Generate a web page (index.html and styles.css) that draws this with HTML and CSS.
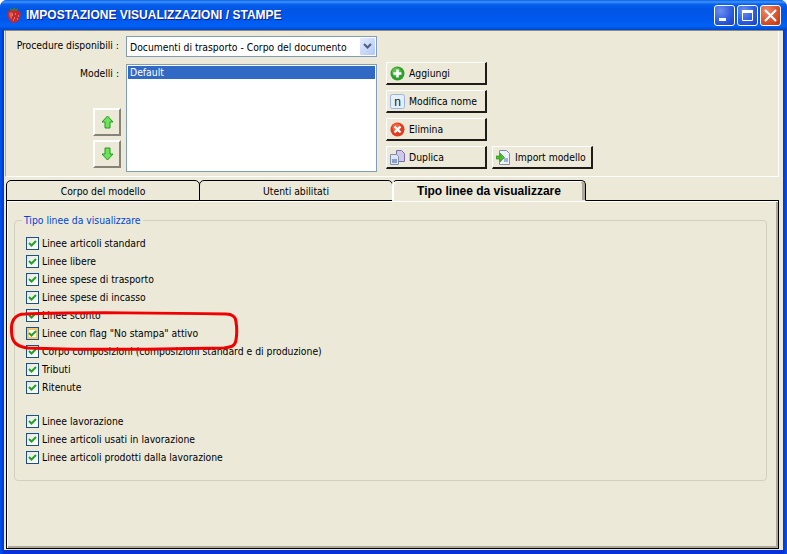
FILE: index.html
```html
<!DOCTYPE html>
<html lang="it">
<head>
<meta charset="utf-8">
<title>Impostazione visualizzazioni / stampe</title>
<link rel="stylesheet" href="styles.css">
</head>
<body>
<div class="window">
  <header class="titlebar">
    <svg class="app-icon" width="14" height="16" viewBox="0 0 14 16"><path d="M3 1l2.500 1.500L7 0l1.500 2.500L11 1l-.5 2.500L13 5H1l2.500-1.500z" fill="#4a7a30"/><path d="M.8 4.500c2-1.500 10.400-1.500 12.400 0 1.500 3.500-.5 8-3.500 10.500-1.500 1.300-3.900 1.300-5.400 0C1.300 12.500-.7 8 .8 4.500z" fill="#c4282c"/><path d="M2 6c1-1 3-1 4 0-1 3-1 5-1.500 6.500C3 11 2 8.500 2 6z" fill="#e25a52"/><path d="M5 8h1M8 7h1M11 9h1M7 11h1M10 12h1M6 13h1" stroke="#f2b8a0"/></svg>
    <h1 class="title">IMPOSTAZIONE VISUALIZZAZIONI / STAMPE</h1>
    <div class="controls">
      <span class="ctl ctl-blue"><svg width="21" height="21" viewBox="0 0 21 21"><rect x="5" y="13" width="7" height="3" fill="#fff"/></svg></span>
      <span class="ctl ctl-blue"><svg width="21" height="21" viewBox="0 0 21 21"><path d="M5.500 5.500h10v10h-10z" fill="none" stroke="#fff"/><rect x="5" y="5" width="11" height="3" fill="#fff"/></svg></span>
      <span class="ctl ctl-red"><svg width="21" height="21" viewBox="0 0 21 21"><path d="M5 5l11 11M16 5L5 16" stroke="#fff" stroke-width="2.200"/></svg></span>
    </div>
  </header>
  <main class="client">
    <section class="panel">
      <label class="lbl">Procedure disponibili :</label>
      <div class="select">
        <span class="select-text">Documenti di trasporto - Corpo del documento</span>
        <span class="select-btn"><svg width="9" height="7" viewBox="0 0 9 7"><path d="M1 1l3.500 3.500L8 1" fill="none" stroke="#4d6185" stroke-width="2"/></svg></span>
      </div>
      <span></span>
      <div class="left-col">
        <label class="lbl">Modelli :</label>
        <div class="arrows">
          <button class="arrow-btn"><svg width="13" height="14" viewBox="0 0 13 14"><path d="M6.500 1L12 7H9v6H4V7H1z" fill="#6fe05a" stroke="#1f9a1f"/></svg></button>
          <button class="arrow-btn"><svg width="13" height="14" viewBox="0 0 13 14"><path d="M6.500 13L12 7H9V1H4v6H1z" fill="#6fe05a" stroke="#1f9a1f"/></svg></button>
        </div>
      </div>
      <div class="listbox"><div class="list-item">Default</div></div>
      <div class="actions">
        <button class="btn"><svg width="15" height="15" viewBox="0 0 15 15"><circle cx="7.500" cy="7.500" r="7" fill="#2e9e2e"/><circle cx="6.500" cy="6" r="4.500" fill="#5cc04a"/><path d="M7.500 3.500v8M3.500 7.500h8" stroke="#fff" stroke-width="2.600"/></svg><span>Aggiungi</span></button>
        <button class="btn"><svg width="15" height="15" viewBox="0 0 15 15"><rect x=".5" y=".5" width="14" height="14" rx="2" fill="#e6edfb" stroke="#9db4e0"/><text x="7.500" y="11.500" text-anchor="middle" class="n-letter">n</text></svg><span>Modifica nome</span></button>
        <button class="btn"><svg width="15" height="15" viewBox="0 0 15 15"><circle cx="7.500" cy="7.500" r="7" fill="#e5391f"/><circle cx="6.500" cy="5.500" r="4" fill="#f0663f"/><path d="M4.500 4.500l6 6M10.500 4.500l-6 6" stroke="#fff" stroke-width="2.400"/></svg><span>Elimina</span></button>
        <div class="action-row">
          <button class="btn"><svg width="15" height="15" viewBox="0 0 15 15"><path d="M6.500.5h5l3 3v8h-8z" fill="#cfc8e8" stroke="#7a70a8"/><path d="M.5 4.500h6l2 2v8h-8z" fill="#dfe6f4" stroke="#7f8fb0"/><rect x="2" y="9" width="5" height="4" fill="#8aa0c8"/></svg><span>Duplica</span></button>
          <button class="btn"><svg width="15" height="15" viewBox="0 0 15 15"><path d="M3.500.5h7l3 3v11h-10z" fill="#eef2fa" stroke="#8090b0"/><rect x="8" y="8" width="4" height="4" fill="#9db4d8"/><path d="M0 6h4V3l4.500 4.500L4 12V9H0z" fill="#4cbb30" stroke="#2a8a20" stroke-width=".6"/></svg><span>Import modello</span></button>
        </div>
      </div>
    </section>
    <nav class="tabs">
      <div class="tab">Corpo del modello</div>
      <div class="tab">Utenti abilitati</div>
      <div class="tab tab-active">Tipo linee da visualizzare</div>
    </nav>
    <section class="page">
      <fieldset class="group">
        <legend class="legend">Tipo linee da visualizzare</legend>
        <div class="check-row"><span class="check"><svg width="11" height="11" viewBox="0 0 11 11"><path d="M2 5l2.500 2.500L9 3" class="tick"/></svg></span>Linee articoli standard</div>
        <div class="check-row"><span class="check"><svg width="11" height="11" viewBox="0 0 11 11"><path d="M2 5l2.500 2.500L9 3" class="tick"/></svg></span>Linee libere</div>
        <div class="check-row"><span class="check"><svg width="11" height="11" viewBox="0 0 11 11"><path d="M2 5l2.500 2.500L9 3" class="tick"/></svg></span>Linee spese di trasporto</div>
        <div class="check-row"><span class="check"><svg width="11" height="11" viewBox="0 0 11 11"><path d="M2 5l2.500 2.500L9 3" class="tick"/></svg></span>Linee spese di incasso</div>
        <div class="check-row"><span class="check"><svg width="11" height="11" viewBox="0 0 11 11"><path d="M2 5l2.500 2.500L9 3" class="tick"/></svg></span>Linee sconto</div>
        <div class="check-row"><span class="check check-hot"><svg width="11" height="11" viewBox="0 0 11 11"><path d="M2 5l2.500 2.500L9 3" class="tick"/></svg></span>Linee con flag "No stampa" attivo</div>
        <div class="check-row"><span class="check"><svg width="11" height="11" viewBox="0 0 11 11"><path d="M2 5l2.500 2.500L9 3" class="tick"/></svg></span>Corpo composizioni (composizioni standard e di produzione)</div>
        <div class="check-row"><span class="check"><svg width="11" height="11" viewBox="0 0 11 11"><path d="M2 5l2.500 2.500L9 3" class="tick"/></svg></span>Tributi</div>
        <div class="check-row"><span class="check"><svg width="11" height="11" viewBox="0 0 11 11"><path d="M2 5l2.500 2.500L9 3" class="tick"/></svg></span>Ritenute</div>
        <div class="check-row row-gap"><span class="check"><svg width="11" height="11" viewBox="0 0 11 11"><path d="M2 5l2.500 2.500L9 3" class="tick"/></svg></span>Linee lavorazione</div>
        <div class="check-row"><span class="check"><svg width="11" height="11" viewBox="0 0 11 11"><path d="M2 5l2.500 2.500L9 3" class="tick"/></svg></span>Linee articoli usati in lavorazione</div>
        <div class="check-row"><span class="check"><svg width="11" height="11" viewBox="0 0 11 11"><path d="M2 5l2.500 2.500L9 3" class="tick"/></svg></span>Linee articoli prodotti dalla lavorazione</div>
      </fieldset>
    </section>
  </main>
  <svg class="annotation" width="232" height="42" viewBox="0 0 232 42"><path d="M16 3C60 1 170 2 217 3c6 0 10 3 10 8 1 6 1 12 0 18-1 6-4 7-12 8-50 1-150 2-196 0C9 36 4 32 3 25 2 18 2 12 5 8c2-3 6-5 11-5z" fill="none" stroke="#f00000" stroke-width="3"/></svg>
</div>
</body>
</html>
```
FILE: styles.css
```css
html, body { margin: 0; padding: 0; background: #fff; }
body { width: 787px; height: 554px; overflow: hidden; font-family: "DejaVu Sans", "Liberation Sans", Arial, sans-serif; font-stretch: condensed; font-size: 10.300px; color: #000; }
.window { position: relative; width: 787px; height: 554px; display: flex; flex-direction: column; border-radius: 7px 7px 0 0; overflow: hidden; background: linear-gradient(90deg, #0055ea 0, #0831d9 4px, #0831d9 783px, #0055ea 787px); }
.titlebar { flex: none; height: 30px; box-sizing: border-box; display: flex; align-items: center; padding: 0 6px 0 7px; background: linear-gradient(180deg, #0a5fe6 0, #3f94fb 2px, #0a62ee 4px, #0055e5 9px, #0058ee 20px, #0062f6 26px, #0046c8 30px); }
.app-icon { flex: none; margin-right: 5px; }
.title { flex: 1; margin: 0; font-size: 12px; font-weight: bold; color: #fff; text-shadow: 1px 1px 0 #0f1f8a; white-space: nowrap; font-family: "Liberation Sans", Arial, sans-serif; font-stretch: normal; }
.controls { display: flex; gap: 2px; margin-top: 1px; }
.ctl { width: 21px; height: 21px; box-sizing: border-box; border: 1px solid #fff; border-radius: 3px; display: block; overflow: hidden; }
.ctl svg { display: block; margin: -1px; }
.ctl-blue { background: radial-gradient(circle at 30% 25%, #6d90ee 0, #2d5de0 55%, #1c3fc4 100%); }
.ctl-red { background: radial-gradient(circle at 30% 25%, #ec8a6c 0, #d9532e 55%, #bd3314 100%); }
.client { flex: none; width: 779px; height: 520px; margin-left: 4px; box-sizing: border-box; background: #ece9d8; padding: 0 4px 1px 1px; display: flex; flex-direction: column; border-top: 1px solid #8a8880; }
.panel { flex: none; display: grid; grid-template-columns: 115px 251px auto; grid-template-rows: 21px 108px; column-gap: 5px; row-gap: 7px; padding: 5px 0 4px; border-right: 1px solid #fff; border-bottom: 1px solid #fff; border-left: 1px solid #aca899; width: 772px; height: 136px; margin-bottom: 3px; }
.lbl { text-align: right; line-height: 18px; white-space: nowrap; display: block; margin-right: 2px; }
.select { border: 1px solid #7f9db9; background: #fff; display: flex; align-items: center; justify-content: space-between; padding: 1px 1px 1px 3px; }
.select-text { white-space: nowrap; }
.select-btn { width: 15px; height: 17px; background: linear-gradient(135deg, #e2eafe, #b4c8f6); border-radius: 1px; display: flex; align-items: center; justify-content: center; }
.left-col { display: flex; flex-direction: column; justify-content: space-between; align-items: flex-end; }
.arrows { display: flex; flex-direction: column; gap: 4px; margin: 0 0 4px; }
.arrow-btn { width: 28px; height: 28px; padding: 0; background: #ece9d8; border-style: solid; border-width: 2px; border-color: #fff #85827a #85827a #fff; display: flex; align-items: center; justify-content: center; box-sizing: border-box; }
.listbox { border: 1px solid #7f9db9; background: #fff; padding: 1px; }
.list-item { background: #316ac5; color: #fff; height: 13px; line-height: 13px; padding-left: 2px; }
.actions { display: flex; flex-direction: column; gap: 5px; margin: -2px 0 0 4px; align-items: flex-start; }
.action-row { display: flex; gap: 5px; }
.btn { width: 101px; height: 23px; box-sizing: border-box; padding: 0 0 0 3px; display: flex; align-items: center; gap: 4px; background: #ece9d8; border: 1px solid #fff; border-right: 2px solid #1d1c18; border-bottom: 2px solid #1d1c18; font: inherit; color: #000; white-space: nowrap; }
.btn svg { flex: none; }
.n-letter { font-family: "Liberation Sans", Arial, sans-serif; font-size: 12px; fill: #222; }
.tabs { flex: none; height: 21px; display: flex; margin-left: 1px; position: relative; z-index: 1; margin-bottom: -1px; }
.tab { width: 194px; height: 21px; box-sizing: border-box; margin-right: -1px; border: 1px solid #000; border-radius: 5px 5px 0 0; display: flex; align-items: center; justify-content: center; background: #ece9d8; }
.tab-active { font-weight: bold; font-size: 12px; font-family: "Liberation Sans", Arial, sans-serif; font-stretch: normal; border-bottom: 1px solid #ece9d8; box-shadow: inset 1px 1px 0 #fff, inset -3px 0 0 #aca899; border-left-color: #fff; }
.page { flex: 1; margin-left: 1px; width: 773px; box-sizing: border-box; border: 1px solid #000; box-shadow: inset 1px 1px 0 #fff, inset -2px -2px 0 #aca899; padding: 13px 0 0 7px; }
.group { margin: 0; padding: 7px 0 0 11px; width: 753px; height: 267px; box-sizing: border-box; border: 1px solid #d0d0bf; border-radius: 4px; }
.legend { padding: 0 2px; margin-left: -4px; color: #0046d5; line-height: 13px; }
.check-row { height: 18px; display: flex; align-items: center; gap: 3px; white-space: nowrap; }
.row-gap { margin-top: 16px; }
.check { width: 13px; height: 13px; box-sizing: border-box; border: 1px solid #1c5180; background: linear-gradient(135deg, #e6e6e0, #fff); display: block; }
.check svg { display: block; }
.check-hot { box-shadow: inset 0 0 0 2px #f8c66a; background: #fff; }
.tick { fill: none; stroke: #21a121; stroke-width: 2; }
.annotation { position: absolute; left: 9px; top: 311px; pointer-events: none; }
```
